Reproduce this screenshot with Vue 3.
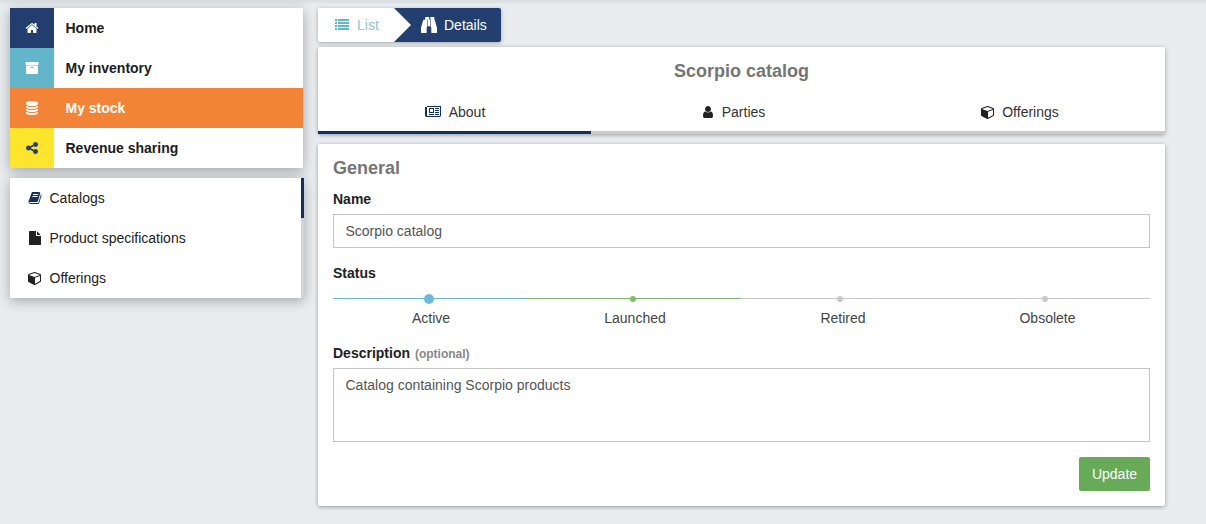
<template>
  <div class="page">
    <div class="topline"></div>
    <div class="layout">
      <aside class="side">
        <nav class="main-menu">
          <a v-for="item in mainMenu" :key="item.label" class="main-item" :class="{ active: item.active }">
            <span class="main-icon" :class="item.tone">
              <svg class="icon" viewBox="0 0 1792 1792"><path :d="icons[item.icon]" /></svg>
            </span>
            <span class="main-label">{{ item.label }}</span>
          </a>
        </nav>
        <nav class="sub-menu">
          <a v-for="(item, i) in subMenu" :key="item.label" class="sub-item" :class="{ current: i === 0 }">
            <svg class="icon sub-icon" viewBox="0 0 1792 1792"><path :d="icons[item.icon]" /></svg>
            <span>{{ item.label }}</span>
          </a>
        </nav>
      </aside>

      <main class="content">
        <div class="crumbs">
          <a class="crumb crumb-list">
            <svg class="icon" viewBox="0 0 1792 1792"><path :d="icons.list" /></svg>
            List
          </a>
          <a class="crumb crumb-details">
            <svg class="icon binoculars" viewBox="0 0 1792 1792" preserveAspectRatio="none"><path :d="icons.binoculars" /></svg>
            Details
          </a>
        </div>

        <section class="card head-card">
          <h1 class="title">Scorpio catalog</h1>
          <div class="tabs">
            <a v-for="(tab, i) in tabs" :key="tab.label" class="tab" :class="{ selected: i === 0 }">
              <svg class="icon tab-icon" :class="{ wide: tab.icon === 'newspaper' }" :viewBox="tab.box || '0 0 1792 1792'"><path :d="icons[tab.icon]" /></svg>
              {{ tab.label }}
            </a>
          </div>
        </section>

        <section class="card form-card">
          <h2 class="section-title">General</h2>
          <label class="field-label">Name</label>
          <input class="text-input" type="text" value="Scorpio catalog" />

          <label class="field-label status-label">Status</label>
          <div class="status">
            <div class="track">
              <span class="seg seg-blue"></span>
              <span class="seg seg-green"></span>
              <span class="seg seg-grey"></span>
            </div>
            <div class="steps">
              <div v-for="step in steps" :key="step.label" class="step">
                <span class="dot-wrap"><span class="dot" :class="step.tone"></span></span>
                <span class="step-label">{{ step.label }}</span>
              </div>
            </div>
          </div>

          <label class="field-label desc-label">Description <small>(optional)</small></label>
          <textarea class="text-area" readonly>Catalog containing Scorpio products</textarea>

          <div class="actions">
            <button class="update-btn">Update</button>
          </div>
        </section>
      </main>
    </div>
  </div>
</template>

<script setup>
const icons = {
  home: 'M1472 992v480q0 26-19 45t-45 19h-384v-384h-256v384h-384q-26 0-45-19t-19-45v-480q0-1 .5-3t.5-3l575-474 575 474q1 2 1 6zm223-69l-62 74q-8 9-21 11h-3q-13 0-21-7l-692-577-692 577q-12 8-24 7-13-2-21-11l-62-74q-8-10-7-23.5t11-21.5l719-599q32-26 76-26t76 26l244 204v-195q0-14 9-23t23-9h192q14 0 23 9t9 23v408l219 182q10 8 11 21.5t-7 23.5z',
  archive: 'M1088 832q0-26-19-45t-45-19h-256q-26 0-45 19t-19 45 19 45 45 19h256q26 0 45-19t19-45zm576-192v960q0 26-19 45t-45 19h-1408q-26 0-45-19t-19-45v-960q0-26 19-45t45-19h1408q26 0 45 19t19 45zm64-448v256q0 26-19 45t-45 19h-1536q-26 0-45-19t-19-45v-256q0-26 19-45t45-19h1536q26 0 45 19t19 45z',
  database: 'M896 768q237 0 443-43t325-127v170q0 69-103 128t-280 93.5-385 34.5-385-34.5-280-93.5-103-128v-170q119 84 325 127t443 43zm0 768q237 0 443-43t325-127v170q0 69-103 128t-280 93.5-385 34.5-385-34.5-280-93.5-103-128v-170q119 84 325 127t443 43zm0-384q237 0 443-43t325-127v170q0 69-103 128t-280 93.5-385 34.5-385-34.5-280-93.5-103-128v-170q119 84 325 127t443 43zm0-1152q208 0 385 34.5t280 93.5 103 128v128q0 69-103 128t-280 93.5-385 34.5-385-34.5-280-93.5-103-128v-128q0-69 103-128t280-93.5 385-34.5z',
  share: 'M1344 1024q133 0 226.5 93.5t93.5 226.5-93.5 226.5-226.5 93.5-226.5-93.5-93.5-226.5q0-12 2-34l-360-180q-92 86-218 86-133 0-226.5-93.5t-93.5-226.5 93.5-226.5 226.5-93.5q126 0 218 86l360-180q-2-22-2-34 0-133 93.5-226.5t226.5-93.5 226.5 93.5 93.5 226.5-93.5 226.5-226.5 93.5q-126 0-218-86l-360 180q2 22 2 34t-2 34l360 180q92-86 218-86z',
  book: 'M1703 478q40 57 18 129l-275 906q-19 64-76.5 107.5t-122.5 43.5h-923q-77 0-148.5-53.5t-99.5-131.5q-24-67-2-127 0-4 3-27t4-37q1-8-3-21.5t-3-19.5q2-11 8-21t16.5-23.5 16.5-23.5q23-38 45-91.5t30-91.5q3-10 .5-30t-.5-28q3-11 17-28t17-23q21-36 42-92t25-90q1-9-2.5-32t.5-28q4-13 22-30.5t22-22.5q19-26 42.5-84.5t27.5-96.5q1-8-3-25.5t-2-26.5q2-8 9-18t18-23 17-21q8-12 16.5-30.5t15-35 16-36 19.5-32 26.5-23.5 36-11.5 47.5 5.5l-1 3q38-9 51-9h761q74 0 114 56t18 130l-274 906q-36 119-71.5 153.5t-128.5 34.5h-869q-27 0-38 15-11 16-1 43 24 70 144 70h923q29 0 56-15.5t35-41.5l300-987q7-22 5-57 38 15 59 43zm-1064 2q-4 13 2 22.5t20 9.5h608q13 0 25.5-9.5t16.5-22.5l21-64q4-13-2-22.5t-20-9.5h-608q-13 0-25.5 9.5t-16.5 22.5zm-83 256q-4 13 2 22.5t20 9.5h608q13 0 25.5-9.5t16.5-22.5l21-64q4-13-2-22.5t-20-9.5h-608q-13 0-25.5 9.5t-16.5 22.5z',
  file: 'M1152 512v-472q22 14 36 28l408 408q14 14 28 36h-472zm-128 32q0 40 28 68t68 28h544v1056q0 40-28 68t-68 28h-1344q-40 0-68-28t-28-68v-1600q0-40 28-68t68-28h800v544z',
  cube: 'M896 1629l640-349v-636l-640 233v752zm-64-865l698-254-698-254-698 254zm832-252v768q0 35-18 65t-49 47l-704 384q-28 16-61 16t-61-16l-704-384q-31-17-49-47t-18-65v-768q0-40 23-73t61-47l704-256q22-8 44-8t44 8l704 256q38 14 61 47t23 73z',
  list: 'M256 1312v192q0 13-9.5 22.5t-22.5 9.5h-192q-13 0-22.5-9.5t-9.5-22.5v-192q0-13 9.5-22.5t22.5-9.5h192q13 0 22.5 9.5t9.5 22.5zm0-384v192q0 13-9.5 22.5t-22.5 9.5h-192q-13 0-22.5-9.5t-9.5-22.5v-192q0-13 9.5-22.5t22.5-9.5h192q13 0 22.5 9.5t9.5 22.5zm0-384v192q0 13-9.5 22.5t-22.5 9.5h-192q-13 0-22.5-9.5t-9.5-22.5v-192q0-13 9.5-22.5t22.5-9.5h192q13 0 22.5 9.5t9.5 22.5zm1536 768v192q0 13-9.5 22.5t-22.5 9.5h-1344q-13 0-22.5-9.5t-9.5-22.5v-192q0-13 9.5-22.5t22.5-9.5h1344q13 0 22.5 9.5t9.5 22.5zm-1536-1152v192q0 13-9.5 22.5t-22.5 9.5h-192q-13 0-22.5-9.5t-9.5-22.5v-192q0-13 9.5-22.5t22.5-9.5h192q13 0 22.5 9.5t9.5 22.5zm1536 768v192q0 13-9.5 22.5t-22.5 9.5h-1344q-13 0-22.5-9.5t-9.5-22.5v-192q0-13 9.5-22.5t22.5-9.5h1344q13 0 22.5 9.5t9.5 22.5zm0-384v192q0 13-9.5 22.5t-22.5 9.5h-1344q-13 0-22.5-9.5t-9.5-22.5v-192q0-13 9.5-22.5t22.5-9.5h1344q13 0 22.5 9.5t9.5 22.5zm0-384v192q0 13-9.5 22.5t-22.5 9.5h-1344q-13 0-22.5-9.5t-9.5-22.5v-192q0-13 9.5-22.5t22.5-9.5h1344q13 0 22.5 9.5t9.5 22.5z',
  binoculars: 'M704 320v768q0 26-19 45t-45 19v576q0 26-19 45t-45 19h-512q-26 0-45-19t-19-45v-512l249-873q7-23 31-23h424zm320 0v704h-256v-704h256zm768 896v512q0 26-19 45t-45 19h-512q-26 0-45-19t-19-45v-576q-26 0-45-19t-19-45v-768h424q24 0 31 23zm-870-1184v288h-448v-288q0-14 9-23t23-9h384q14 0 23 9t9 23zm576 0v288h-448v-288q0-14 9-23t23-9h384q14 0 23 9t9 23z',
  user: 'M1536 1399q0 109-62.5 187t-150.5 78h-854q-88 0-150.5-78t-62.5-187q0-85 8.5-160.5t31.5-152 58.5-131 94-89 134.5-34.5q131 128 313 128t313-128q76 0 134.5 34.5t94 89 58.5 131 31.5 152 8.5 160.5zm-256-887q0 159-112.5 271.5t-271.5 112.5-271.5-112.5-112.5-271.5 112.5-271.5 271.5-112.5 271.5 112.5 112.5 271.5z',
  newspaper: 'M1024 512h-384v384h384v-384zm128 640v128h-640v-128h640zm0-768v640h-640v-640h640zm640 768v128h-512v-128h512zm0-256v128h-512v-128h512zm0-256v128h-512v-128h512zm0-256v128h-512v-128h512zm128 960v-1088h-1664v1088q0 26 19 45t45 19h1536q26 0 45-19t19-45zm128-1216v1216q0 80-56 136t-136 56h-1664q-80 0-136-56t-56-136v-1088h256v-128h1792z'
}

const mainMenu = [
  { label: 'Home', icon: 'home', tone: 'tone-navy' },
  { label: 'My inventory', icon: 'archive', tone: 'tone-teal' },
  { label: 'My stock', icon: 'database', tone: 'tone-orange', active: true },
  { label: 'Revenue sharing', icon: 'share', tone: 'tone-yellow' }
]

const subMenu = [
  { label: 'Catalogs', icon: 'book' },
  { label: 'Product specifications', icon: 'file' },
  { label: 'Offerings', icon: 'cube' }
]

const tabs = [
  { label: 'About', icon: 'newspaper', box: '0 0 2048 1792' },
  { label: 'Parties', icon: 'user' },
  { label: 'Offerings', icon: 'cube' }
]

const steps = [
  { label: 'Active', tone: 'dot-current' },
  { label: 'Launched', tone: 'dot-green' },
  { label: 'Retired', tone: 'dot-grey' },
  { label: 'Obsolete', tone: 'dot-grey' }
]
</script>

<style>
html,
body {
  margin: 0;
  background: #e9edf0;
}
</style>

<style scoped>
.page {
  position: relative;
  height: 524px;
  overflow: hidden;
  background: #e9edf0;
  font-family: "Liberation Sans", Arial, sans-serif;
  font-size: 14px;
  color: #333;
}

.topline {
  height: 0;
  box-shadow: 0 0 4px 1px rgba(0, 0, 0, 0.18);
}

.layout {
  display: flex;
  align-items: flex-start;
  padding: 8px 0 0 10px;
}

.icon {
  display: block;
  width: 14px;
  height: 14px;
  fill: currentColor;
}

.side {
  width: 293px;
  margin-right: 15px;
}

.main-menu,
.sub-menu {
  background: #fff;
  box-shadow: 0 3px 12px rgba(0, 0, 0, 0.3);
}

.main-item {
  display: flex;
  align-items: center;
  height: 40px;
  font-weight: 700;
  color: #1c1c1c;
}

.main-item.active {
  background: #f38337;
  color: #fff;
}

.main-icon {
  display: flex;
  align-items: center;
  justify-content: center;
  width: 44px;
  height: 40px;
  margin-right: 11.5px;
  color: #fff;
}

.tone-navy { background: #213e6e; }
.tone-teal { background: #63b6c9; }
.tone-orange { background: #f38337; }
.tone-yellow { background: #fde52e; color: #223f6f; }

.sub-menu {
  position: relative;
  width: 294px;
  margin-top: 10px;
}

.sub-menu::after {
  content: "";
  position: absolute;
  top: 0;
  bottom: 0;
  right: 0;
  width: 3px;
  background: #d3d3d3;
}

.sub-item {
  position: relative;
  display: flex;
  align-items: center;
  height: 40px;
  padding-left: 18px;
  color: #222;
}

.sub-icon {
  margin-right: 7.5px;
}

.sub-item.current .sub-icon {
  color: #12305f;
}

.sub-item.current::after {
  content: "";
  position: absolute;
  z-index: 1;
  top: 0;
  right: 0;
  width: 3px;
  height: 40px;
  background: #12305f;
}

.content {
  width: 847px;
}

.crumbs {
  display: flex;
  width: 183px;
  height: 34px;
  border-radius: 2px;
  overflow: hidden;
  box-shadow: 0 1px 4px rgba(0, 0, 0, 0.3);
  background: #fff;
}

.crumb {
  display: flex;
  align-items: center;
  gap: 8px;
}

.crumb-list {
  width: 76px;
  padding-left: 17px;
  color: #8cc5d4;
}

.crumb-list .icon {
  color: #63b6c9;
}

.crumb-details {
  flex: 1;
  margin-left: -17px;
  padding-left: 27px;
  color: #fff;
  background: #223f6f;
  clip-path: polygon(0 0, 100% 0, 100% 100%, 0 100%, 17px 50%);
}

.binoculars {
  width: 16px;
  height: 16px;
  margin-right: -1px;
}

.card {
  background: #fff;
  border-radius: 2px;
  box-shadow: 0 1px 4px rgba(0, 0, 0, 0.35);
}

.head-card {
  margin-top: 5px;
}

.title {
  margin: 0;
  padding-top: 14px;
  height: 29px;
  box-sizing: content-box;
  line-height: 21px;
  font-size: 18px;
  font-weight: 700;
  text-align: center;
  color: #757575;
}

.tabs {
  display: flex;
}

.tab {
  display: flex;
  flex: 1;
  align-items: center;
  justify-content: center;
  gap: 7px;
  box-sizing: border-box;
  height: 44px;
  padding: 3px 3px 0 0;
  border-bottom: 3px solid #ccc;
  color: #333;
}

.tab.selected {
  flex: 0 0 273px;
  padding-right: 0;
  padding-left: 1px;
  gap: 8px;
  border-bottom-color: #12305f;
}

.tab-icon {
  color: #222;
}

.tab-icon.wide {
  width: 16px;
  color: #12305f;
}

.form-card {
  margin-top: 10px;
  height: 362px;
  box-sizing: border-box;
  padding: 14px 15px 15px;
}

.section-title {
  margin: 0 0 13px;
  font-size: 18px;
  line-height: 20px;
  font-weight: 700;
  color: #757575;
}

.field-label {
  display: block;
  font-weight: 700;
  line-height: 16px;
  color: #222;
}

.field-label small {
  margin-left: 1px;
  font-size: 12px;
  color: #888;
}

.text-input,
.text-area {
  display: block;
  width: 100%;
  box-sizing: border-box;
  margin-top: 7px;
  padding: 0 11.5px;
  border: 1px solid #c5c5c5;
  border-radius: 0;
  outline: none;
  font-family: inherit;
  font-size: 14px;
  color: #555;
  background: #fff;
}

.text-input {
  height: 34px;
}

.text-area {
  height: 74px;
  margin-top: 6px;
  padding-top: 7px;
  resize: none;
  line-height: 18px;
}

.status-label {
  margin-top: 17px;
}

.status {
  margin-top: 17px;
}

.track {
  display: flex;
  height: 1px;
}

.seg {
  display: block;
  height: 1px;
}

.seg-blue { width: 192px; background: #6bb8dd; }
.seg-green { width: 216px; background: #7dbd6b; }
.seg-grey { flex: 1; background: #c8c8c8; }

.steps {
  display: grid;
  grid-template-columns: 196px 212px 204px 205px;
  margin-top: -5px;
}

.step {
  display: flex;
  flex-direction: column;
  align-items: center;
}

.dot-wrap {
  display: flex;
  align-items: center;
  justify-content: center;
  width: 10px;
  height: 10px;
  margin-left: -5px;
}

.step:nth-child(3) .dot-wrap {
  margin-left: -7px;
}

.dot {
  display: block;
  width: 6px;
  height: 6px;
  border-radius: 50%;
}

.dot-current {
  width: 10px;
  height: 10px;
  background: #6bb8dd;
}

.dot-green { background: #7dbd6b; }
.dot-grey { background: #c8c8c8; }

.step-label {
  margin-top: 6px;
  line-height: 16px;
  color: #444;
}

.desc-label {
  margin-top: 19px;
}

.actions {
  display: flex;
  justify-content: flex-end;
  margin-top: 15px;
}

.update-btn {
  width: 71px;
  height: 34px;
  border: 0;
  border-radius: 2px;
  background: #67aa58;
  color: #fff;
  font-family: inherit;
  font-size: 14px;
}
</style>
